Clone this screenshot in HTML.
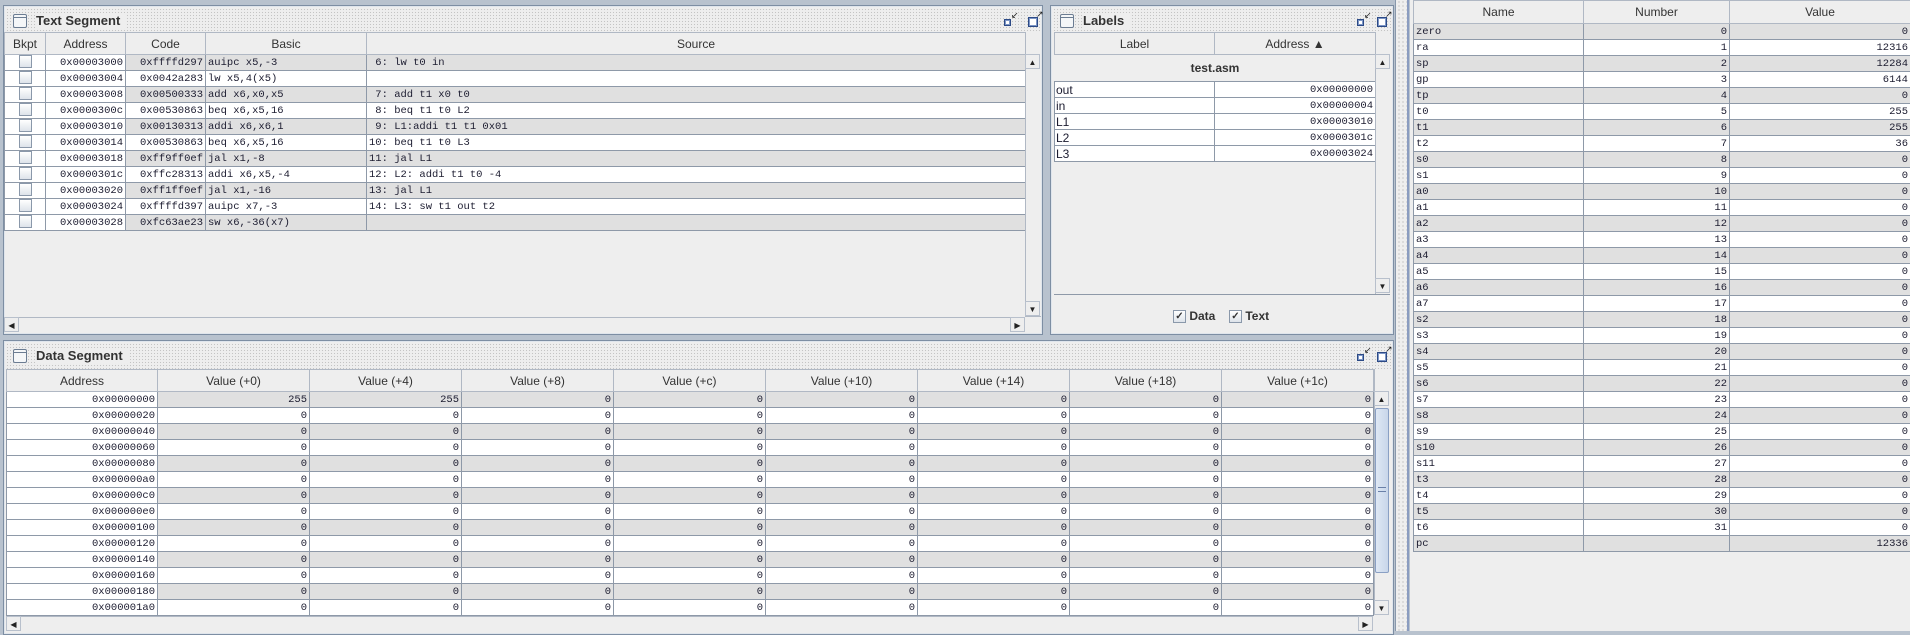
<!DOCTYPE html>
<html><head><meta charset="utf-8">
<style>
*{box-sizing:border-box;margin:0;padding:0}
body{width:1910px;height:631px;overflow:hidden;background:#b8c2ce;font-family:"Liberation Sans",sans-serif;position:relative}
.frame{position:absolute;background:#eeeeee;border:1px solid #7d8ea3;box-shadow:inset 0 0 0 1px #dfe5ec}
.title{position:absolute;left:2px;right:2px;top:2px;height:26px;background-color:#eeeeee;background-image:radial-gradient(#c4c4c4 0.6px,transparent 0.8px);background-size:3px 3px}
.title .t{position:absolute;left:30px;top:5px;font-size:13px;font-weight:bold;color:#333;background:#eeeeee;padding-right:6px}
.title .ic{position:absolute;left:7px;top:6px;width:14px;height:14px;border:1px solid #6b7c92;border-radius:2px;background:#f4f6f8}
.title .ic:after{content:"";position:absolute;left:0;right:0;top:2px;border-top:1px solid #6b7c92}
.mn{position:absolute;width:7px;height:7px;border:1px solid #2c4a86;background:#fff;box-shadow:inset 0 0 0 1px #7d96c6}
.mx{position:absolute;width:10px;height:10px;border:1px solid #2c4a86;background:#fff;box-shadow:inset 0 0 0 1px #7d96c6}
.arr{position:absolute;font-size:9px;color:#222;line-height:9px}
table{border-collapse:collapse;table-layout:fixed;position:absolute}
td,th{height:16px;border:1px solid #8e99a8;font-size:10.5px;font-family:"Liberation Mono",monospace;color:#1c1c30;white-space:pre;overflow:hidden;padding:0 2px;line-height:14px}
th{height:22px;background:#eeeeee;font-family:"Liberation Sans",sans-serif;font-weight:normal;font-size:12px;color:#333;text-align:center;border-color:#b0b8c4}
tr.g td{background:#e0e0e0}
tr.w td{background:#fff}
td.r{text-align:right}
td.wh{background:#fff!important}
.cb{display:inline-block;width:13px;height:13px;border:1px solid #8a98aa;background:linear-gradient(#fff,#dde3ea);vertical-align:middle}
.vs{position:absolute;background:#eeeeee;border-left:1px solid #b0b8c4}
.btn{position:absolute;width:15px;height:15px;font-size:8px;text-align:center;line-height:15px;color:#222;background:#eeeeee;border:1px solid #b8c0cc}
.thumb{position:absolute;background:linear-gradient(90deg,#dfe8f4,#c8d6ea);border:1px solid #8aa0c4;border-radius:2px}
</style></head><body>

<!-- Text Segment -->
<div class="frame" style="left:3px;top:5px;width:1040px;height:330px">
 <div class="title"><div class="ic"></div><div class="t">Text Segment</div>
  <div class="mn" style="left:998px;top:11px"></div><div class="arr" style="left:1005px;top:3px">&#8601;</div>
  <div class="mx" style="left:1022px;top:9px"></div><div class="arr" style="left:1030px;top:2px">&#8599;</div>
 </div>
</div>
<table style="left:4px;top:32px;width:1021px">
<colgroup><col style="width:41px"><col style="width:80px"><col style="width:80px"><col style="width:161px"><col style="width:659px"></colgroup>
<tr><th>Bkpt</th><th>Address</th><th>Code</th><th>Basic</th><th>Source</th></tr>
<tr class="g"><td class="wh" style="text-align:center"><span class="cb"></span></td><td class="r wh">0x00003000</td><td class="r">0xffffd297</td><td>auipc x5,-3</td><td> 6: lw t0 in</td></tr>
<tr class="w"><td style="text-align:center"><span class="cb"></span></td><td class="r">0x00003004</td><td class="r">0x0042a283</td><td>lw x5,4(x5)</td><td></td></tr>
<tr class="g"><td class="wh" style="text-align:center"><span class="cb"></span></td><td class="r wh">0x00003008</td><td class="r">0x00500333</td><td>add x6,x0,x5</td><td> 7: add t1 x0 t0</td></tr>
<tr class="w"><td style="text-align:center"><span class="cb"></span></td><td class="r">0x0000300c</td><td class="r">0x00530863</td><td>beq x6,x5,16</td><td> 8: beq t1 t0 L2</td></tr>
<tr class="g"><td class="wh" style="text-align:center"><span class="cb"></span></td><td class="r wh">0x00003010</td><td class="r">0x00130313</td><td>addi x6,x6,1</td><td> 9: L1:addi t1 t1 0x01</td></tr>
<tr class="w"><td style="text-align:center"><span class="cb"></span></td><td class="r">0x00003014</td><td class="r">0x00530863</td><td>beq x6,x5,16</td><td>10: beq t1 t0 L3</td></tr>
<tr class="g"><td class="wh" style="text-align:center"><span class="cb"></span></td><td class="r wh">0x00003018</td><td class="r">0xff9ff0ef</td><td>jal x1,-8</td><td>11: jal L1</td></tr>
<tr class="w"><td style="text-align:center"><span class="cb"></span></td><td class="r">0x0000301c</td><td class="r">0xffc28313</td><td>addi x6,x5,-4</td><td>12: L2: addi t1 t0 -4</td></tr>
<tr class="g"><td class="wh" style="text-align:center"><span class="cb"></span></td><td class="r wh">0x00003020</td><td class="r">0xff1ff0ef</td><td>jal x1,-16</td><td>13: jal L1</td></tr>
<tr class="w"><td style="text-align:center"><span class="cb"></span></td><td class="r">0x00003024</td><td class="r">0xffffd397</td><td>auipc x7,-3</td><td>14: L3: sw t1 out t2</td></tr>
<tr class="g"><td class="wh" style="text-align:center"><span class="cb"></span></td><td class="r wh">0x00003028</td><td class="r">0xfc63ae23</td><td>sw x6,-36(x7)</td><td></td></tr>
</table>
<div class="vs" style="left:1025px;top:32px;width:16px;height:285px;border-bottom:1px solid #b0b8c4"></div>
<div class="btn" style="left:1025px;top:54px">&#9650;</div>
<div class="btn" style="left:1025px;top:301px">&#9660;</div>
<div style="position:absolute;left:4px;top:317px;width:1021px;height:15px;border-top:1px solid #b0b8c4;background:#eeeeee"></div>
<div class="btn" style="left:4px;top:317px">&#9664;</div>
<div class="btn" style="left:1010px;top:317px">&#9654;</div>

<!-- Labels -->
<div class="frame" style="left:1050px;top:5px;width:344px;height:330px">
 <div class="title"><div class="ic"></div><div class="t">Labels</div>
  <div class="mn" style="left:304px;top:11px"></div><div class="arr" style="left:311px;top:3px">&#8601;</div>
  <div class="mx" style="left:324px;top:9px"></div><div class="arr" style="left:332px;top:2px">&#8599;</div>
 </div>
</div>
<table style="left:1054px;top:32px;width:321px">
<colgroup><col style="width:160px"><col style="width:161px"></colgroup>
<tr><th>Label</th><th>Address &#9650;</th></tr>
<tr><td colspan="2" style="height:27px;background:#eeeeee;border:none;text-align:center;font-family:'Liberation Sans',sans-serif;font-weight:bold;font-size:12px;color:#333">test.asm</td></tr>
<tr class="w"><td style="font-family:'Liberation Sans',sans-serif;font-size:12px;padding:0 1px">out</td><td class="r">0x00000000</td></tr>
<tr class="w"><td style="font-family:'Liberation Sans',sans-serif;font-size:12px;padding:0 1px">in</td><td class="r">0x00000004</td></tr>
<tr class="w"><td style="font-family:'Liberation Sans',sans-serif;font-size:12px;padding:0 1px">L1</td><td class="r">0x00003010</td></tr>
<tr class="w"><td style="font-family:'Liberation Sans',sans-serif;font-size:12px;padding:0 1px">L2</td><td class="r">0x0000301c</td></tr>
<tr class="w"><td style="font-family:'Liberation Sans',sans-serif;font-size:12px;padding:0 1px">L3</td><td class="r">0x00003024</td></tr>
</table>
<div style="position:absolute;left:1054px;top:294px;width:336px;border-top:1px solid #8e99a8"></div>
<div class="vs" style="left:1375px;top:32px;width:15px;height:262px"></div>
<div class="btn" style="left:1375px;top:54px">&#9650;</div>
<div class="btn" style="left:1375px;top:278px">&#9660;</div>
<div style="position:absolute;left:1173px;top:309px;font-size:12px;font-weight:bold;color:#333"><span class="cb" style="font-size:10px;text-align:center;line-height:11px">&#10003;</span> Data</div>
<div style="position:absolute;left:1229px;top:309px;font-size:12px;font-weight:bold;color:#333"><span class="cb" style="font-size:10px;text-align:center;line-height:11px">&#10003;</span> Text</div>

<!-- Data Segment -->
<div class="frame" style="left:3px;top:340px;width:1391px;height:295px">
 <div class="title"><div class="ic"></div><div class="t">Data Segment</div>
  <div class="mn" style="left:1351px;top:11px"></div><div class="arr" style="left:1358px;top:3px">&#8601;</div>
  <div class="mx" style="left:1371px;top:9px"></div><div class="arr" style="left:1379px;top:2px">&#8599;</div>
 </div>
</div>
<table style="left:6px;top:369px;width:1367px">
<colgroup><col style="width:151px"><col style="width:152px"><col style="width:152px"><col style="width:152px"><col style="width:152px"><col style="width:152px"><col style="width:152px"><col style="width:152px"><col style="width:152px"></colgroup>
<tr><th>Address</th><th>Value (+0)</th><th>Value (+4)</th><th>Value (+8)</th><th>Value (+c)</th><th>Value (+10)</th><th>Value (+14)</th><th>Value (+18)</th><th>Value (+1c)</th></tr>
<tr class="g"><td class="r wh">0x00000000</td><td class="r">255</td><td class="r">255</td><td class="r">0</td><td class="r">0</td><td class="r">0</td><td class="r">0</td><td class="r">0</td><td class="r">0</td></tr>
<tr class="w"><td class="r">0x00000020</td><td class="r">0</td><td class="r">0</td><td class="r">0</td><td class="r">0</td><td class="r">0</td><td class="r">0</td><td class="r">0</td><td class="r">0</td></tr>
<tr class="g"><td class="r wh">0x00000040</td><td class="r">0</td><td class="r">0</td><td class="r">0</td><td class="r">0</td><td class="r">0</td><td class="r">0</td><td class="r">0</td><td class="r">0</td></tr>
<tr class="w"><td class="r">0x00000060</td><td class="r">0</td><td class="r">0</td><td class="r">0</td><td class="r">0</td><td class="r">0</td><td class="r">0</td><td class="r">0</td><td class="r">0</td></tr>
<tr class="g"><td class="r wh">0x00000080</td><td class="r">0</td><td class="r">0</td><td class="r">0</td><td class="r">0</td><td class="r">0</td><td class="r">0</td><td class="r">0</td><td class="r">0</td></tr>
<tr class="w"><td class="r">0x000000a0</td><td class="r">0</td><td class="r">0</td><td class="r">0</td><td class="r">0</td><td class="r">0</td><td class="r">0</td><td class="r">0</td><td class="r">0</td></tr>
<tr class="g"><td class="r wh">0x000000c0</td><td class="r">0</td><td class="r">0</td><td class="r">0</td><td class="r">0</td><td class="r">0</td><td class="r">0</td><td class="r">0</td><td class="r">0</td></tr>
<tr class="w"><td class="r">0x000000e0</td><td class="r">0</td><td class="r">0</td><td class="r">0</td><td class="r">0</td><td class="r">0</td><td class="r">0</td><td class="r">0</td><td class="r">0</td></tr>
<tr class="g"><td class="r wh">0x00000100</td><td class="r">0</td><td class="r">0</td><td class="r">0</td><td class="r">0</td><td class="r">0</td><td class="r">0</td><td class="r">0</td><td class="r">0</td></tr>
<tr class="w"><td class="r">0x00000120</td><td class="r">0</td><td class="r">0</td><td class="r">0</td><td class="r">0</td><td class="r">0</td><td class="r">0</td><td class="r">0</td><td class="r">0</td></tr>
<tr class="g"><td class="r wh">0x00000140</td><td class="r">0</td><td class="r">0</td><td class="r">0</td><td class="r">0</td><td class="r">0</td><td class="r">0</td><td class="r">0</td><td class="r">0</td></tr>
<tr class="w"><td class="r">0x00000160</td><td class="r">0</td><td class="r">0</td><td class="r">0</td><td class="r">0</td><td class="r">0</td><td class="r">0</td><td class="r">0</td><td class="r">0</td></tr>
<tr class="g"><td class="r wh">0x00000180</td><td class="r">0</td><td class="r">0</td><td class="r">0</td><td class="r">0</td><td class="r">0</td><td class="r">0</td><td class="r">0</td><td class="r">0</td></tr>
<tr class="w"><td class="r">0x000001a0</td><td class="r">0</td><td class="r">0</td><td class="r">0</td><td class="r">0</td><td class="r">0</td><td class="r">0</td><td class="r">0</td><td class="r">0</td></tr>
</table>
<div class="vs" style="left:1374px;top:369px;width:16px;height:246px"></div>
<div class="btn" style="left:1374px;top:391px">&#9650;</div>
<div class="thumb" style="left:1375px;top:408px;width:14px;height:165px"></div>
<div style="position:absolute;left:1378px;top:487px;width:8px;height:5px;border-top:1px solid #6a80a8;border-bottom:1px solid #6a80a8"></div>
<div class="btn" style="left:1374px;top:600px">&#9660;</div>
<div style="position:absolute;left:6px;top:616px;width:1367px;height:15px;border-top:1px solid #b0b8c4;background:#eeeeee"></div>
<div class="btn" style="left:6px;top:616px">&#9664;</div>
<div class="btn" style="left:1358px;top:616px">&#9654;</div>

<!-- splitter -->
<div style="position:absolute;left:1395px;top:0;width:14px;height:631px;background-color:#eeeeee;background-image:radial-gradient(#a8a8a8 0.6px,transparent 0.8px);background-size:4px 4px;background-position:5px 0;border-left:1px solid #8898ac;border-right:2px solid #8a9cc0"></div>

<!-- Registers -->
<div style="position:absolute;left:1410px;top:0;width:500px;height:631px;background:#eeeeee"></div>
<table style="left:1413px;top:0;width:497px">
<colgroup><col style="width:170px"><col style="width:146px"><col style="width:181px"></colgroup>
<tr><th style="height:23px">Name</th><th>Number</th><th>Value</th></tr>
<tr class="g"><td>zero</td><td class="r">0</td><td class="r">0</td></tr>
<tr class="w"><td>ra</td><td class="r">1</td><td class="r">12316</td></tr>
<tr class="g"><td>sp</td><td class="r">2</td><td class="r">12284</td></tr>
<tr class="w"><td>gp</td><td class="r">3</td><td class="r">6144</td></tr>
<tr class="g"><td>tp</td><td class="r">4</td><td class="r">0</td></tr>
<tr class="w"><td>t0</td><td class="r">5</td><td class="r">255</td></tr>
<tr class="g"><td>t1</td><td class="r">6</td><td class="r">255</td></tr>
<tr class="w"><td>t2</td><td class="r">7</td><td class="r">36</td></tr>
<tr class="g"><td>s0</td><td class="r">8</td><td class="r">0</td></tr>
<tr class="w"><td>s1</td><td class="r">9</td><td class="r">0</td></tr>
<tr class="g"><td>a0</td><td class="r">10</td><td class="r">0</td></tr>
<tr class="w"><td>a1</td><td class="r">11</td><td class="r">0</td></tr>
<tr class="g"><td>a2</td><td class="r">12</td><td class="r">0</td></tr>
<tr class="w"><td>a3</td><td class="r">13</td><td class="r">0</td></tr>
<tr class="g"><td>a4</td><td class="r">14</td><td class="r">0</td></tr>
<tr class="w"><td>a5</td><td class="r">15</td><td class="r">0</td></tr>
<tr class="g"><td>a6</td><td class="r">16</td><td class="r">0</td></tr>
<tr class="w"><td>a7</td><td class="r">17</td><td class="r">0</td></tr>
<tr class="g"><td>s2</td><td class="r">18</td><td class="r">0</td></tr>
<tr class="w"><td>s3</td><td class="r">19</td><td class="r">0</td></tr>
<tr class="g"><td>s4</td><td class="r">20</td><td class="r">0</td></tr>
<tr class="w"><td>s5</td><td class="r">21</td><td class="r">0</td></tr>
<tr class="g"><td>s6</td><td class="r">22</td><td class="r">0</td></tr>
<tr class="w"><td>s7</td><td class="r">23</td><td class="r">0</td></tr>
<tr class="g"><td>s8</td><td class="r">24</td><td class="r">0</td></tr>
<tr class="w"><td>s9</td><td class="r">25</td><td class="r">0</td></tr>
<tr class="g"><td>s10</td><td class="r">26</td><td class="r">0</td></tr>
<tr class="w"><td>s11</td><td class="r">27</td><td class="r">0</td></tr>
<tr class="g"><td>t3</td><td class="r">28</td><td class="r">0</td></tr>
<tr class="w"><td>t4</td><td class="r">29</td><td class="r">0</td></tr>
<tr class="g"><td>t5</td><td class="r">30</td><td class="r">0</td></tr>
<tr class="w"><td>t6</td><td class="r">31</td><td class="r">0</td></tr>
<tr class="g"><td>pc</td><td class="r"></td><td class="r">12336</td></tr>
</table>
</body></html>
